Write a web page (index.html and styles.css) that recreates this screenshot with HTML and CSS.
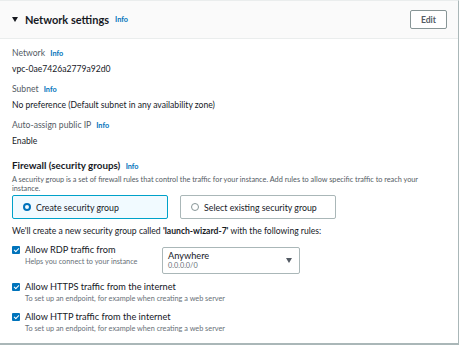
FILE: index.html
```html
<!DOCTYPE html>
<html lang="en">
<head>
    <meta charset="UTF-8">
    <title>Network settings</title>
    <link rel="stylesheet" href="styles.css">
</head>
<body>
    <div class="panel">
        <div class="panel-header">
            <div class="title">
                <span class="caret"></span>
                <h2>Network settings</h2>
                <a class="info">Info</a>
            </div>
            <button class="btn">Edit</button>
        </div>

        <div class="panel-body">
            <div class="field">
                <div class="label">Network <a class="info">Info</a></div>
                <div class="value">vpc-0ae7426a2779a92d0</div>
            </div>
            <div class="field">
                <div class="label">Subnet <a class="info">Info</a></div>
                <div class="value">No preference (Default subnet in any availability zone)</div>
            </div>
            <div class="field">
                <div class="label">Auto-assign public IP <a class="info">Info</a></div>
                <div class="value">Enable</div>
            </div>

            <div class="firewall">
                <h3>Firewall (security groups) <a class="info">Info</a></h3>
                <p class="desc">A security group is a set of firewall rules that control the traffic for your instance. Add rules to allow specific traffic to reach your instance.</p>

                <div class="tiles">
                    <label class="tile selected"><span class="radio"></span>Create security group</label>
                    <label class="tile"><span class="radio"></span>Select existing security group</label>
                </div>

                <p class="note">We'll create a new security group called <b>'launch-wizard-7'</b> with the following rules:</p>

                <div class="rule">
                    <span class="checkbox"></span>
                    <div class="rule-text fixed">
                        <div class="rule-label">Allow RDP traffic from</div>
                        <div class="hint">Helps you connect to your instance</div>
                    </div>
                    <div class="select">
                        <div>
                            <div class="select-value">Anywhere</div>
                            <div class="hint">0.0.0.0/0</div>
                        </div>
                        <span class="select-caret"></span>
                    </div>
                </div>
                <div class="rule">
                    <span class="checkbox"></span>
                    <div class="rule-text">
                        <div class="rule-label">Allow HTTPS traffic from the internet</div>
                        <div class="hint">To set up an endpoint, for example when creating a web server</div>
                    </div>
                </div>
                <div class="rule">
                    <span class="checkbox"></span>
                    <div class="rule-text">
                        <div class="rule-label">Allow HTTP traffic from the internet</div>
                        <div class="hint">To set up an endpoint, for example when creating a web server</div>
                    </div>
                </div>
            </div>
        </div>
    </div>
</body>
</html>
```

FILE: styles.css
```css
body {
    margin: 0;
    font-family: Lato, "Liberation Sans", Arial, sans-serif;
    font-size: 8.6px;
    color: #16191f;
    background: #fff;
}

.panel {
    width: 459px;
    height: 345px;
    box-sizing: border-box;
    border-top: 1px solid #eaeded;
    border-right: 1px solid #aab7b8;
    border-bottom: 2px solid #aab7b8;
}

.panel-header {
    display: flex;
    justify-content: space-between;
    align-items: center;
    height: 37px;
    padding: 0 11px 0 12px;
    background: #fafafa;
    border-bottom: 1px solid #eaeded;
}

.title {
    display: flex;
    align-items: center;
}

.caret {
    width: 0;
    height: 0;
    border-left: 3px solid transparent;
    border-right: 3px solid transparent;
    border-top: 5px solid #16191f;
    margin-right: 7px;
}

h2 {
    margin: 0 6px 0 0;
    font-size: 11px;
    font-weight: 700;
}

.info {
    color: #0073bb;
    font-size: 7.3px;
    font-weight: 700;
}

.btn {
    height: 19px;
    padding: 0 10px;
    background: #fff;
    border: 1px solid #879596;
    border-radius: 2px;
    font-family: inherit;
    font-size: 8.6px;
    font-weight: 700;
    color: #545b64;
}

.panel-body {
    padding: 8px 14px 0 12px;
}

.field {
    margin-bottom: 8px;
}

.label {
    line-height: 12px;
    color: #545b64;
}

.label .info {
    margin-left: 3px;
}

.value {
    margin-top: 3px;
    line-height: 12px;
}

.firewall h3 {
    margin: 11px 0 0;
    font-size: 9.8px;
    line-height: 14px;
    font-weight: 700;
}

.firewall h3 .info {
    margin-left: 3px;
}

.desc {
    margin: 1px 0 0;
    font-size: 7.3px;
    line-height: 9px;
    color: #545b64;
}

.tiles {
    display: flex;
    gap: 12px;
    margin-top: 2px;
}

.tile {
    display: flex;
    align-items: center;
    width: 156px;
    height: 24px;
    box-sizing: border-box;
    padding-left: 10px;
    border: 1px solid #aab7b8;
    border-radius: 2px;
    font-size: 8.8px;
}

.tile.selected {
    background: #f1faff;
    border-color: #00a1c9;
}

.radio {
    width: 8px;
    height: 8px;
    box-sizing: border-box;
    border: 1px solid #879596;
    border-radius: 50%;
    margin-right: 5px;
}

.tile.selected .radio {
    border: 2.5px solid #0073bb;
}

.note {
    margin: 6px 0 0;
    line-height: 12px;
}

.rule {
    display: flex;
    align-items: flex-start;
    margin-top: 6px;
}

.checkbox {
    position: relative;
    flex: none;
    width: 8px;
    height: 8px;
    margin: 3px 5px 0 0;
    background: #0073bb;
    border-radius: 1px;
}

.checkbox::after {
    content: "";
    position: absolute;
    left: 2.5px;
    top: 0.5px;
    width: 2px;
    height: 4px;
    border: solid #fff;
    border-width: 0 1.3px 1.3px 0;
    transform: rotate(45deg);
}

.rule-label {
    line-height: 13px;
    font-size: 9.2px;
}

.rule-text .hint {
    margin-top: 1px;
}

.hint {
    font-size: 7.3px;
    line-height: 10px;
    color: #687078;
}

.rule-text.fixed {
    width: 137px;
}

.select {
    display: flex;
    justify-content: space-between;
    align-items: center;
    width: 138px;
    height: 27px;
    box-sizing: border-box;
    padding: 0 7px 0 5px;
    margin-top: 4px;
    border: 1px solid #aab7b8;
    border-radius: 2px;
}

.select-value {
    line-height: 11px;
    font-size: 9.2px;
}

.select-caret {
    width: 0;
    height: 0;
    border-left: 3.5px solid transparent;
    border-right: 3.5px solid transparent;
    border-top: 5px solid #545b64;
}
```
